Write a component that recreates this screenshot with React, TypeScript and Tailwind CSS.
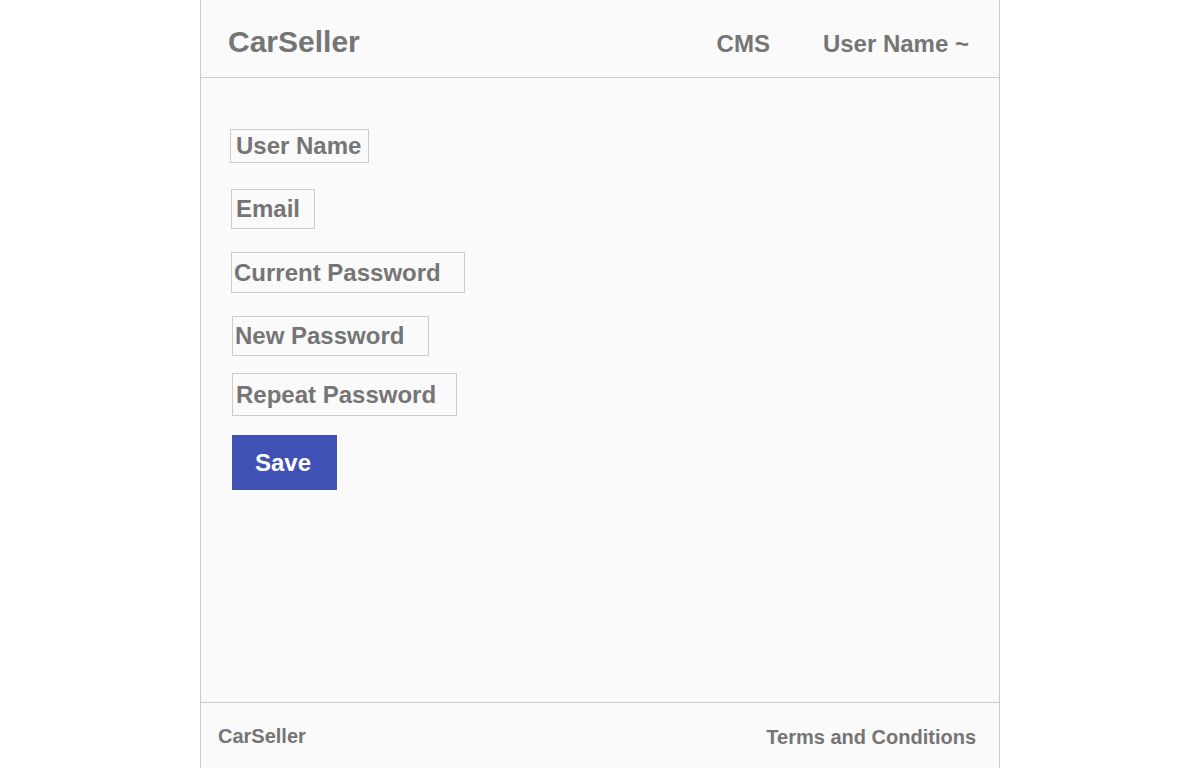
import React from 'react';

const fields = [
  { label: 'User Name', box: 'ml-[29px] mt-[51px] w-[139px] h-[34px] pl-[5px]' },
  { label: 'Email', box: 'ml-[30px] mt-[26px] w-[84px] h-[40px] pl-[4px]' },
  { label: 'Current Password', box: 'ml-[30px] mt-[23px] w-[234px] h-[41px] pl-[2px]' },
  { label: 'New Password', box: 'ml-[31px] mt-[23px] w-[197px] h-[40px] pl-[2px]' },
  { label: 'Repeat Password', box: 'ml-[31px] mt-[17px] w-[225px] h-[43px] pl-[3px]' },
];

const App: React.FC = () => {
  return (
    <div className="min-h-screen w-full bg-white font-['Liberation_Sans',Arial,sans-serif]">
      <div className="mx-auto w-[800px] h-[768px] flex flex-col bg-[#fafafa] border-x border-[#cccccc] text-[#757575] font-bold">
        {/* Header */}
        <header className="h-[78px] shrink-0 border-b border-[#cccccc] flex items-center justify-between pl-[27px] pr-[30px]">
          <span className="text-[30px] leading-none mt-[6px]">CarSeller</span>
          <nav className="flex items-center gap-[53px] mt-[10px] text-[24px] leading-none">
            <span>CMS</span>
            <span>User Name ~</span>
          </nav>
        </header>

        {/* Profile form */}
        <main className="flex-1 flex flex-col items-start">
          {fields.map(f => (
            <div
              key={f.label}
              className={`${f.box} border border-[#cccccc] flex items-center text-[24px] leading-none whitespace-nowrap`}
            >
              {f.label}
            </div>
          ))}
          <button className="ml-[31px] mt-[19px] w-[105px] h-[55px] bg-[#3f51b5] text-white text-[24px] leading-none font-bold flex items-center pl-[23px]">
            Save
          </button>
        </main>

        {/* Footer */}
        <footer className="h-[66px] shrink-0 border-t border-[#cccccc] flex items-center justify-between pl-[17px] pr-[23px]">
          <span className="text-[20px] leading-none">CarSeller</span>
          <span className="text-[20px] leading-none mt-[3px]">Terms and Conditions</span>
        </footer>
      </div>
    </div>
  );
};

export default App;
